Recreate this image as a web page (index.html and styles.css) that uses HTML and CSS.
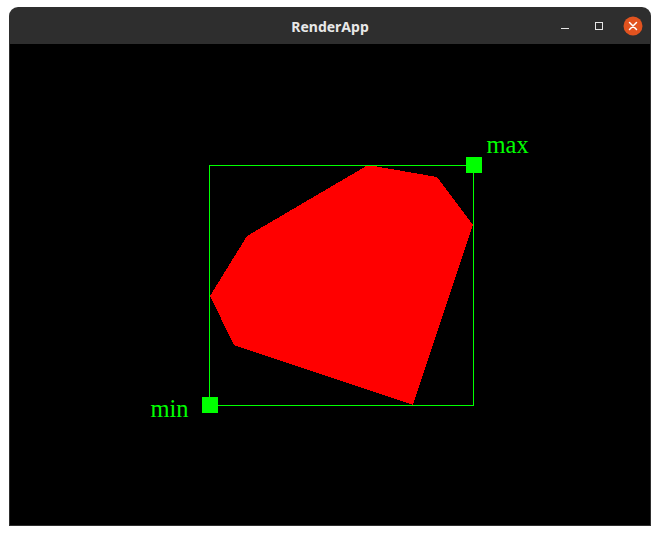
FILE: index.html
```html
<!DOCTYPE html>
<html>
<head>
<meta charset="utf-8">
<link rel="stylesheet" href="styles.css">
</head>
<body>
<div class="window">
  <div class="titlebar">
    <div></div>
    <div class="title">RenderApp</div>
    <svg class="controls" width="100" height="37" viewBox="0 0 100 37">
      <line x1="10" y1="21.5" x2="18" y2="21.5" stroke="#e6e6e6" stroke-width="1"/>
      <rect x="44.5" y="15.5" width="7" height="7" fill="none" stroke="#e6e6e6" stroke-width="1"/>
      <circle cx="82" cy="19" r="9.5" fill="#e2531f"/>
      <path d="M78.5 15.5 L85.5 22.5 M85.5 15.5 L78.5 22.5" stroke="#ffffff" stroke-width="1.5" stroke-linecap="round"/>
    </svg>
  </div>
  <div class="canvas">
    <svg class="scene" width="640" height="481" viewBox="10 44 640 481">
      <polygon points="368,165 437,177 473,225 413,405 234,345 210,296 247,236" fill="#ff0000" shape-rendering="crispEdges"/>
      <rect x="209.5" y="165.5" width="264" height="240" fill="none" stroke="#00ff00" stroke-width="1" shape-rendering="crispEdges"/>
      <rect x="466" y="157" width="16" height="16" fill="#00ff00"/>
      <rect x="202" y="397" width="16" height="16" fill="#00ff00"/>
      <text class="label" x="486.5" y="152.5">max</text>
      <text class="label" x="150.5" y="416.5">min</text>
    </svg>
  </div>
</div>
</body>
</html>
```

FILE: styles.css
```css
html, body {
  margin: 0;
  padding: 0;
  background: #ffffff;
}
.window {
  margin: 7px 0 0 9px;
  width: 642px;
  height: 519px;
  background: #2e2e2e;
  border-radius: 9px 9px 0 0;
  display: flex;
  flex-direction: column;
}
.titlebar {
  height: 37px;
  flex: none;
  display: grid;
  grid-template-columns: 1fr auto 1fr;
  align-items: center;
}
.title {
  font-family: "Noto Sans", "DejaVu Sans", sans-serif;
  font-weight: bold;
  font-size: 14px;
  color: #e8e8e8;
  padding-top: 2px;
}
.controls {
  justify-self: end;
  display: block;
}
.canvas {
  flex: 1;
  margin: 0 1px 1px 1px;
  background: #000000;
}
.scene {
  display: block;
}
.label {
  font-family: "Liberation Serif", "Times New Roman", serif;
  font-size: 24.5px;
  fill: #00ff00;
}
```
